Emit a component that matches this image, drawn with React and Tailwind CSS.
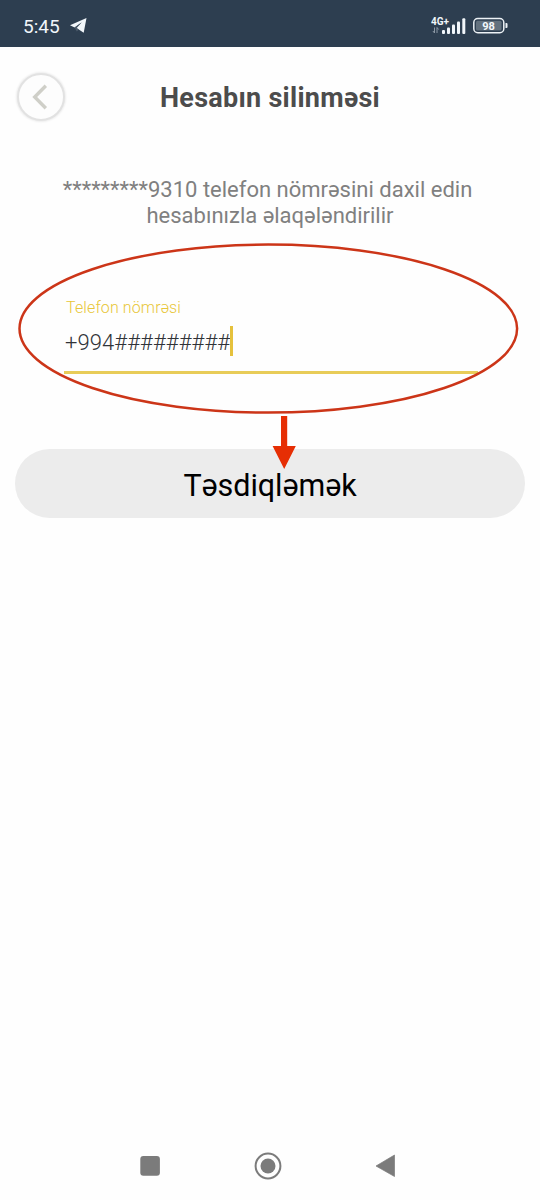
function StatusBar() {
  return (
    <div className="flex h-[47px] items-start justify-between bg-[#2d3e50] pr-[32px] pl-[23px] text-[#f1f6fa]">
      <div className="flex items-center gap-[10px] pt-[13px]">
        <span className="text-[19px] leading-[27px] font-normal">5:45</span>
        <svg width="17" height="15" viewBox="0 0 17 15" className="mt-[-2px]">
          <path d="M16.5 0 0 7.3l4.6 2.2L11.5 4.5 6.5 10l7.2 4.8z" fill="currentColor" />
          <path d="M4.6 9.5 11.8 4.2 6.5 10l2.4 1.6-2.1 1.9z" fill="#4c5b6b" />
        </svg>
      </div>
      <div className="flex items-start gap-[7px] pt-[16px]">
        <svg width="35" height="19" viewBox="0 0 35 19" fill="currentColor">
          <text x="0" y="8.5" fontSize="10" fontWeight="700" fontFamily="Roboto, sans-serif" textLength="18">4G+</text>
          <path d="M3.5 11.5v5.5l-1.6-2M6 17v-5.5l1.6 2" fill="none" stroke="#8c98a5" strokeWidth="1" />
          <rect x="11" y="14" width="3" height="4" rx="1" />
          <rect x="16" y="11.5" width="3" height="6.5" rx="1" />
          <rect x="21" y="8.5" width="3" height="9.5" rx="1" />
          <rect x="26" y="5.5" width="3" height="12.5" rx="1" />
          <rect x="31.3" y="2.3" width="3" height="15.7" rx="1" />
        </svg>
        <svg width="35" height="19" viewBox="0 0 35 19" fill="none">
          <rect x="0.8" y="2.5" width="30" height="14.2" rx="4" stroke="#edf2f6" strokeWidth="1.5" />
          <rect x="3" y="4.7" width="25.5" height="9.8" rx="1.5" fill="#63717e" />
          <path d="M32.5 7h1a1 1 0 0 1 1 1v3a1 1 0 0 1-1 1h-1z" fill="#edf2f6" />
          <text x="15.6" y="13.6" textAnchor="middle" fontSize="11" fontWeight="700" fill="#f5f9fc" fontFamily="Roboto, sans-serif">98</text>
        </svg>
      </div>
    </div>
  );
}

function Header() {
  return (
    <header className="grid h-[100px] grid-cols-[50px_1fr_50px] items-center px-[16px]">
      <button
        aria-label="Geri"
        className="ml-px flex h-[48px] w-[48px] items-center justify-center rounded-full border-2 border-[#e2e2e2] bg-[#fdfdfd] shadow-[0_0_2px_1px_#ececec]"
      >
        <svg width="16" height="26" viewBox="0 0 16 26" className="mr-[3px]" fill="none">
          <path d="M13.8 1.7 2.7 13l11.1 11.3" stroke="#cfcfc8" strokeWidth="3.4" />
        </svg>
      </button>
      <h1 className="pt-[2px] text-center text-[27px] leading-[32px] font-bold tracking-[0.27px] whitespace-nowrap text-[#4c4c4c]">
        Hesabın silinməsi
      </h1>
    </header>
  );
}

function PhoneField() {
  return (
    <div className="relative mt-[13px] h-[172px] pt-[56px]">
      <div className="mr-[62px] ml-[64px] flex h-[76px] flex-col border-b-[3px] border-[#e8cc58]">
        <label className="pl-[2px] text-[16px] leading-[20px] font-light tracking-[0.12px] text-[#e8c638]">
          Telefon nömrəsi
        </label>
        <div className="mt-[10px] flex items-center">
          <span className="pl-px text-[22px] leading-[30px] font-light tracking-[0.08px] text-[#303338]">
            +994#########
          </span>
          <span className="h-[30px] w-[3px] -translate-y-[2px] bg-[#e5c13c]" />
        </div>
      </div>
      <svg className="absolute top-0 left-0" width="540" height="230" viewBox="0 242 540 230" fill="none">
        <ellipse cx="268.3" cy="328.6" rx="248.8" ry="84" stroke="#cc3518" strokeWidth="2.5" />
        <path d="M281 416h6.2v30h8.6L284.2 469l-11.6-23h8.4z" fill="#e62e04" />
      </svg>
    </div>
  );
}

function NavigationBar() {
  return (
    <nav className="mt-auto h-[68px] pl-[140px]">
      <svg width="256" height="68" viewBox="140 1132 256 68" fill="#7b7b7b">
        <rect x="140.3" y="1156" width="19.6" height="19.8" rx="3" />
        <circle cx="268" cy="1166" r="12.4" fill="none" stroke="#7b7b7b" strokeWidth="2" />
        <circle cx="268" cy="1166" r="7.5" />
        <path d="M394.5 1155v21.5L376 1166z" stroke="#7b7b7b" strokeWidth="0.7" strokeLinejoin="round" />
      </svg>
    </nav>
  );
}

export default function App() {
  return (
    <div className="flex h-[1200px] w-[540px] flex-col overflow-hidden bg-[#fefefe] font-['Roboto',sans-serif]">
      <StatusBar />
      <Header />
      <div className="mt-[30px] text-center text-[22px] leading-[26px] text-[#808080]">
        <p className="pr-[5px]">*********9310 telefon nömrəsini daxil edin</p>
        <p>hesabınızla əlaqələndirilir</p>
      </div>
      <PhoneField />
      <button className="mx-[15px] mt-[35px] h-[69px] rounded-full bg-[#ececec] pt-[4px] text-[30.5px] leading-[36px] tracking-[-0.05px] text-black">
        Təsdiqləmək
      </button>
      <NavigationBar />
    </div>
  );
}
